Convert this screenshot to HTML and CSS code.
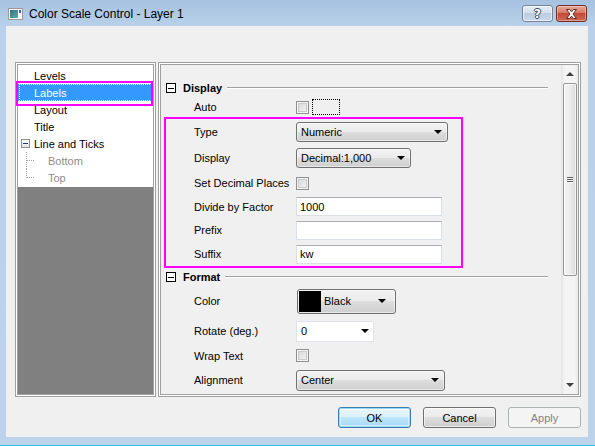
FILE: index.html
```html
<!DOCTYPE html>
<html>
<head>
<meta charset="utf-8">
<title>Color Scale Control - Layer 1</title>
<link rel="stylesheet" href="styles.css">
</head>
<body>
<div class="win">
  <div class="titlebar">
    <svg class="appicon" width="15" height="12" viewBox="0 0 15 12">
      <defs>
        <linearGradient id="ig" x1="0" y1="0" x2="1" y2="1">
          <stop offset="0" stop-color="#2a6f8c"/>
          <stop offset="1" stop-color="#5fb39a"/>
        </linearGradient>
      </defs>
      <rect x="0.5" y="0.5" width="14" height="11" fill="#f6f6f6" stroke="#9a9a9a"/>
      <rect x="2" y="2" width="8" height="8" fill="url(#ig)"/>
      <rect x="11" y="2" width="2" height="3" fill="#2c6fd0"/>
    </svg>
    <span class="title">Color Scale Control - Layer 1</span>
    <div class="capbtns">
      <div class="cbtn help"><span class="q">?</span></div>
      <div class="cbtn close">
        <svg width="13" height="10" viewBox="0 0 13 10">
          <path d="M1.5 0.5 H4.5 L6.5 2.8 L8.5 0.5 H11.5 L8 5 L11.5 9.5 H8.5 L6.5 7.2 L4.5 9.5 H1.5 L5 5 Z" fill="#fff" stroke="#5a2a24" stroke-width="1"/>
        </svg>
      </div>
    </div>
  </div>

  <div class="client">
    <div class="panels">
      <div class="tree">
        <div class="tree-in">
          <div class="tree-list">
            <div class="node">Levels</div>
            <div class="node sel"><span class="focus">Labels</span></div>
            <div class="node">Layout</div>
            <div class="node">Title</div>
            <div class="node parent"><span class="expander"><span class="dash"></span></span>Line and Ticks</div>
            <div class="node child">
              <svg class="conn" width="30" height="17" viewBox="0 0 30 17"><path d="M8.5 0 V17 M9 8.5 H16" stroke="#a0a0a0" stroke-dasharray="1 1" fill="none"/></svg>Bottom
            </div>
            <div class="node child">
              <svg class="conn" width="30" height="17" viewBox="0 0 30 17"><path d="M8.5 0 V8.5 M9 8.5 H16" stroke="#a0a0a0" stroke-dasharray="1 1" fill="none"/></svg>Top
            </div>
            <div class="mark-sel"></div>
          </div>
          <div class="tree-empty"></div>
        </div>
      </div>

      <div class="props">
        <div class="props-in">
          <div class="pbody">
            <div class="sec"><span class="minus"><span class="dash"></span></span><b>Display</b><span class="rule"></span></div>
            <div class="row h20"><span class="lbl">Auto</span><span class="chk"></span><span class="focusrect"></span></div>
            <div class="pink">
              <div class="row in h25"><span class="lbl">Type</span><div class="combo w152"><span>Numeric</span><span class="arr"></span></div></div>
              <div class="row in h27"><span class="lbl">Display</span><div class="combo w115"><span>Decimal:1,000</span><span class="arr"></span></div></div>
              <div class="row in h24"><span class="lbl">Set Decimal Places</span><span class="chk"></span></div>
              <div class="row in h23"><span class="lbl">Divide by Factor</span><div class="tbox">1000</div></div>
              <div class="row in h24"><span class="lbl">Prefix</span><div class="tbox"></div></div>
              <div class="row in h24"><span class="lbl">Suffix</span><div class="tbox">kw</div></div>
            </div>
            <div class="sec"><span class="minus"><span class="dash"></span></span><b>Format</b><span class="rule"></span></div>
            <div class="row h30"><span class="lbl">Color</span><div class="combo colorcombo"><span class="swatch"></span><span class="ctext">Black</span><span class="arr"></span></div></div>
            <div class="row h30"><span class="lbl">Rotate (deg.)</span><div class="ecombo"><span>0</span><span class="arr"></span></div></div>
            <div class="row h19"><span class="lbl">Wrap Text</span><span class="chk"></span></div>
            <div class="row h30"><span class="lbl">Alignment</span><div class="combo w149"><span>Center</span><span class="arr"></span></div></div>
          </div>
          <div class="sb">
            <div class="sbbtn"><span class="uparr"></span></div>
            <div class="thumb"><span class="grip"></span></div>
            <div class="track"></div>
            <div class="sbbtn"><span class="dnarr"></span></div>
          </div>
        </div>
      </div>
    </div>

    <div class="buttons">
      <div class="btn ok">OK</div>
      <div class="btn">Cancel</div>
      <div class="btn disabled">Apply</div>
    </div>
  </div>
</div>
</body>
</html>
```

FILE: styles.css
```css
* { box-sizing: border-box; }
html, body { margin: 0; padding: 0; }
body {
  font-family: "Liberation Sans", Arial, sans-serif;
  font-size: 11px;
  color: #000;
  background: #bcd3eb;
}
.win {
  width: 595px;
  height: 446px;
  background: linear-gradient(#a6c2e0 0, #b9d1ea 26px, #bcd3eb 100%);
  border-bottom: 1px solid #2cc0e4;
  overflow: hidden;
}
.titlebar {
  height: 26px;
  display: flex;
  align-items: center;
  padding-left: 8px;
}
.appicon { display: block; margin-top: 1px; }
.title {
  margin-left: 6px;
  font-size: 12px;
  color: #000;
  margin-top: 1px;
}
.capbtns {
  margin-left: auto;
  align-self: flex-start;
  margin-top: 5px;
  margin-right: 8px;
  display: flex;
  gap: 3px;
}
.cbtn {
  width: 31px;
  height: 17px;
  border-radius: 3px;
  display: flex;
  align-items: center;
  justify-content: center;
}
.help {
  border: 1px solid #76879d;
  background: linear-gradient(#e6eef7 0, #d3e0ef 45%, #bccde2 50%, #c9d8ea 100%);
  box-shadow: inset 0 0 0 1px rgba(255,255,255,0.6);
}
.help .q {
  font-family: "DejaVu Sans", sans-serif;
  font-weight: bold;
  font-size: 12px;
  color: #fff;
  text-shadow: 1px 0 0 #3a4a5c, -1px 0 0 #3a4a5c, 0 1px 0 #3a4a5c, 0 -1px 0 #3a4a5c;
  line-height: 1;
}
.close {
  border: 1px solid #6e2d28;
  background: linear-gradient(#e8a796 0, #d67a68 45%, #c34a38 50%, #d06a55 100%);
  box-shadow: inset 0 0 0 1px rgba(255,255,255,0.35);
}
.close svg { display: block; }

.client {
  margin: 0 7px 0 6px;
  height: 411px;
  background: #f0f0f0;
  padding: 36px 7px 0 9px;
  display: flex;
  flex-direction: column;
}
.panels {
  display: flex;
  gap: 2px;
  height: 335px;
}

/* Tree */
.tree {
  width: 141px;
  border: 1px solid #a0a0a0;
  padding: 1px;
  background: #fff;
}
.tree-in {
  height: 100%;
  border: 1px solid #a0a0a0;
  display: flex;
  flex-direction: column;
  background: #808080;
}
.tree-list {
  position: relative;
  background: #fff;
  padding-top: 2px;
  padding-bottom: 1px;
}
.node {
  height: 17px;
  display: flex;
  align-items: center;
  padding-left: 16px;
  white-space: nowrap;
}
.node.sel {
  background: #3399ff;
  color: #fff;
  margin-right: 1px;
  padding-left: 1px;
}
.node.sel .focus {
  flex: 1;
  height: 100%;
  display: flex;
  align-items: center;
  padding-left: 14px;
  border: 1px dotted #fff;
}
.node.parent { padding-left: 3px; }
.expander {
  width: 9px;
  height: 9px;
  border: 1px solid #8e8f8f;
  background: linear-gradient(#fff, #e4e4e4);
  margin-right: 4px;
  display: flex;
  align-items: center;
  justify-content: center;
}
.expander .dash {
  width: 5px;
  height: 1px;
  background: #1d3b7a;
}
.node.child { padding-left: 0; color: #8d8d8d; }
.conn { display: block; flex: none; }
.mark-sel {
  position: absolute;
  left: -2px;
  top: 16px;
  width: 137px;
  height: 25px;
  border: 2px solid #ff00ff;
}
.tree-empty { flex: 1; }

/* Property panel */
.props {
  flex: 1;
  border: 1px solid #a0a0a0;
  padding: 1px;
  background: #fff;
}
.props-in {
  height: 100%;
  border: 1px solid #a0a0a0;
  background: #f0f0f0;
  display: flex;
}
.pbody {
  flex: 1;
  padding-top: 14px;
  display: flex;
  flex-direction: column;
  overflow: hidden;
}
.sec {
  height: 18px;
  flex: none;
  display: flex;
  align-items: center;
  padding-left: 5px;
}
.minus {
  width: 10px;
  height: 10px;
  border: 1px solid #000;
  background: #fff;
  display: flex;
  align-items: center;
  justify-content: center;
  margin-right: 7px;
}
.minus .dash {
  width: 6px;
  height: 1px;
  background: #000;
}
.sec b { font-weight: bold; }
.rule {
  flex: 1;
  height: 1px;
  background: #a0a0a0;
  box-shadow: 0 1px 0 #fff;
  margin-left: 5px;
  margin-right: 13px;
  margin-top: -1px;
}
.row {
  display: flex;
  align-items: center;
  padding-left: 33px;
  flex: none;
  white-space: nowrap;
}
.row.in { padding-left: 28px; }
.lbl { width: 102px; flex: none; }
.h19 { height: 19px; }
.h20 { height: 20px; }
.h23 { height: 23px; }
.h24 { height: 24px; }
.h25 { height: 25px; }
.h27 { height: 27px; }
.h30 { height: 30px; }

.pink {
  margin-left: 3px;
  width: 299px;
  height: 151px;
  flex: none;
  border: 2px solid #ff00ff;
}

.chk {
  width: 13px;
  height: 13px;
  border: 1px solid #8e8f8f;
  background: linear-gradient(135deg, #d4d4d4, #f7f7f7);
  box-shadow: inset 0 0 0 1px #f4f4f4, inset 0 0 0 2px #c9cbcd;
  flex: none;
}
.focusrect {
  width: 28px;
  height: 16px;
  border: 1px dotted #000;
  margin-left: 3px;
}

.combo {
  height: 20px;
  border: 1px solid #707070;
  border-radius: 3px;
  background: linear-gradient(#f2f2f2 0, #ebebeb 50%, #dddddd 50%, #cfcfcf 100%);
  box-shadow: inset 0 0 0 1px rgba(255,255,255,0.5);
  display: flex;
  align-items: center;
  justify-content: space-between;
  padding-left: 4px;
  padding-right: 5px;
  flex: none;
}
.w152 { width: 152px; }
.w115 { width: 115px; }
.w149 { width: 149px; height: 21px; }
.arr {
  width: 0;
  height: 0;
  border-top: 4px solid #000;
  border-left: 4px solid transparent;
  border-right: 4px solid transparent;
  flex: none;
}
.colorcombo {
  width: 99px;
  height: 25px;
  margin-left: 1px;
  padding-left: 1px;
  padding-right: 9px;
  justify-content: flex-start;
}
.swatch {
  width: 22px;
  height: 21px;
  background: #000;
  flex: none;
}
.ctext { margin-left: 3px; flex: 1; }
.ecombo {
  width: 78px;
  height: 21px;
  border: 1px solid #e2e3ea;
  background: #fff;
  display: flex;
  align-items: center;
  justify-content: space-between;
  padding-left: 4px;
  padding-right: 4px;
  flex: none;
}
.tbox {
  width: 146px;
  height: 19px;
  border: 1px solid #dbdfe6;
  border-top-color: #abadb3;
  background: #fff;
  display: flex;
  align-items: center;
  padding-left: 3px;
  flex: none;
}

/* Scrollbar */
.sb {
  width: 17px;
  flex: none;
  display: flex;
  flex-direction: column;
  background: linear-gradient(90deg, #e3e3e3 0, #f4f4f4 20%, #f4f4f4 80%, #e9e9e9 100%);
}
.sbbtn {
  height: 18px;
  flex: none;
  display: flex;
  align-items: center;
  justify-content: center;
}
.uparr {
  width: 0; height: 0;
  border-bottom: 4px solid #404040;
  border-left: 4px solid transparent;
  border-right: 4px solid transparent;
}
.dnarr {
  width: 0; height: 0;
  border-top: 4px solid #404040;
  border-left: 4px solid transparent;
  border-right: 4px solid transparent;
}
.thumb {
  height: 193px;
  flex: none;
  margin-left: 2px;
  margin-right: 1px;
  border: 1px solid #979797;
  border-radius: 2px;
  background: linear-gradient(90deg, #f4f4f4 0, #ececec 50%, #dadada 100%);
  box-shadow: inset 0 0 0 1px rgba(255,255,255,0.7);
  display: flex;
  align-items: center;
  justify-content: center;
}
.grip {
  width: 6px;
  height: 6px;
  background: repeating-linear-gradient(#5a5a5a 0 1px, #fafafa 1px 2px);
}
.track { flex: 1; }

/* Dialog buttons */
.buttons {
  display: flex;
  justify-content: flex-end;
  gap: 12px;
  margin-top: 10px;
}
.btn {
  width: 73px;
  height: 21px;
  border: 1px solid #707070;
  border-radius: 3px;
  background: linear-gradient(#f2f2f2 0, #ebebeb 50%, #dddddd 50%, #cfcfcf 100%);
  box-shadow: inset 0 0 0 1px rgba(255,255,255,0.6);
  display: flex;
  align-items: center;
  justify-content: center;
}
.btn.ok {
  border-color: #3c7fb1;
  background: linear-gradient(#eaf6fd 0, #d9f0fc 50%, #bee6fd 50%, #a7d9f5 100%);
  box-shadow: inset 0 0 0 1px #9ad7f4, inset 0 0 0 2px rgba(255,255,255,0.5);
}
.btn.disabled {
  border-color: #adb2b5;
  background: #f4f4f4;
  color: #838383;
  box-shadow: none;
}
```
